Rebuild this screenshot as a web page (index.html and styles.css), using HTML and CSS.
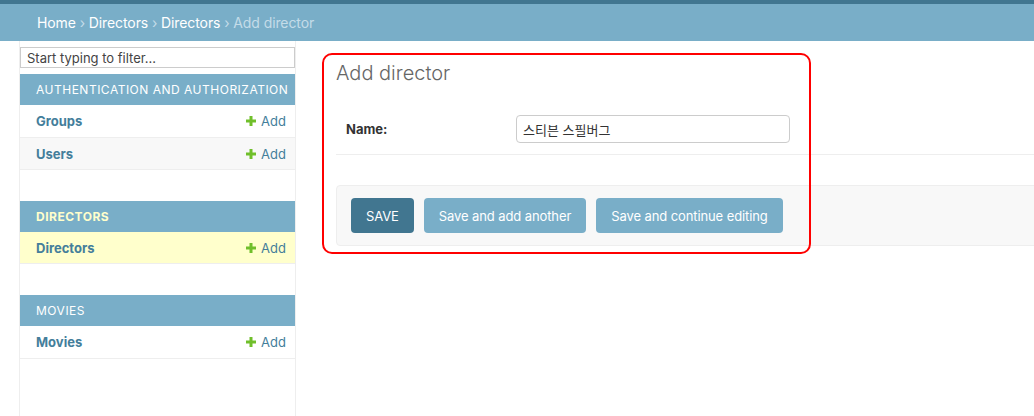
FILE: index.html
```html
<!DOCTYPE html>
<html lang="en">
<head>
<meta charset="utf-8">
<title>Add director</title>
<link rel="stylesheet" href="styles.css">
</head>
<body>
<div class="topstrip"></div>
<div class="breadcrumbs">
  <a href="#">Home</a> › <a href="#">Directors</a> › <a href="#">Directors</a> › Add director
</div>
<div class="main">
  <nav class="sidebar">
    <input class="filter" type="search" placeholder="Start typing to filter...">
    <div class="module">
      <div class="caption">Authentication and Authorization</div>
      <div class="row"><a class="model" href="#">Groups</a><a class="add" href="#"><svg class="plus" viewBox="0 0 10 10"><rect x="3.5" y="0" width="3" height="10"/><rect x="0" y="3.5" width="10" height="3"/></svg>Add</a></div>
      <div class="row alt"><a class="model" href="#">Users</a><a class="add" href="#"><svg class="plus" viewBox="0 0 10 10"><rect x="3.5" y="0" width="3" height="10"/><rect x="0" y="3.5" width="10" height="3"/></svg>Add</a></div>
    </div>
    <div class="module">
      <div class="caption current">Directors</div>
      <div class="row selected"><a class="model" href="#">Directors</a><a class="add" href="#"><svg class="plus" viewBox="0 0 10 10"><rect x="3.5" y="0" width="3" height="10"/><rect x="0" y="3.5" width="10" height="3"/></svg>Add</a></div>
    </div>
    <div class="module">
      <div class="caption">Movies</div>
      <div class="row"><a class="model" href="#">Movies</a><a class="add" href="#"><svg class="plus" viewBox="0 0 10 10"><rect x="3.5" y="0" width="3" height="10"/><rect x="0" y="3.5" width="10" height="3"/></svg>Add</a></div>
    </div>
  </nav>
  <div class="content">
    <h1>Add director</h1>
    <div class="form-row">
      <label class="label">Name:</label>
      <input class="text" type="text" value="스티븐 스필버그">
    </div>
    <div class="submit-row">
      <button class="btn default">SAVE</button>
      <button class="btn">Save and add another</button>
      <button class="btn">Save and continue editing</button>
    </div>
    <div class="highlight"></div>
  </div>
</div>
</body>
</html>
```

FILE: styles.css
```css
* { box-sizing: border-box; }
html, body { margin: 0; padding: 0; }
body {
  font-family: Inter, "Noto Sans CJK KR", sans-serif;
  font-size: 14px;
  color: #333;
  background: #fff;
  overflow: hidden;
  height: 416px;
}
a { text-decoration: none; }
.topstrip { height: 4px; background: #417690; }
.breadcrumbs {
  background: #79aec8;
  color: #c4dce8;
  height: 37px;
  padding: 0 37px;
  display: flex;
  align-items: center;
  font-size: 14px;
  letter-spacing: -0.1px;
  white-space: pre;
}
.breadcrumbs a { color: #fff; }
.main {
  display: flex;
  height: 375px;
}
.sidebar {
  margin-left: 19px;
  width: 277px;
  flex: none;
  border-left: 1px solid #eee;
  border-right: 1px solid #eee;
  padding-top: 6px;
}
.filter {
  display: block;
  width: 275px;
  height: 21px;
  margin: 0 0 6px 0;
  border: 1px solid #ccc;
  padding: 0 6px;
  font-family: Inter, sans-serif;
  font-size: 13px;
  color: #333;
  outline: none;
}
.filter::placeholder { color: #444; }
.module { margin-bottom: 31px; }
.caption {
  height: 31px;
  background: #79aec8;
  color: #fff;
  font-size: 12px;
  letter-spacing: 0.5px;
  text-transform: uppercase;
  padding-left: 16px;
  display: flex;
  align-items: center;
}
.caption.current { color: #ffc; font-weight: 700; }
.row {
  height: 33px;
  border-bottom: 1px solid #eee;
  display: flex;
  align-items: center;
  justify-content: space-between;
  padding: 0 9px 0 16px;
  font-size: 13px;
}
.row.alt { background: #f8f8f8; height: 32px; }
.row.selected { background: #ffc; height: 32px; }
.model { color: #447e9b; font-weight: 700; }
.add { color: #447e9b; display: flex; align-items: center; gap: 5px; }
.plus { width: 10px; height: 10px; fill: #70bf2b; }
.content {
  position: relative;
  flex: 1;
  padding: 20px 0 0 40px;
  min-width: 0;
}
h1 {
  margin: 0 0 20px 0;
  font-size: 20px;
  font-weight: 300;
  color: #666;
  line-height: 24px;
  padding-top: 0;
}
.form-row {
  margin-top: 20px;
  padding: 10px 10px 11px;
  border-bottom: 1px solid #eee;
  display: flex;
  align-items: center;
}
.label {
  width: 170px;
  font-size: 13px;
  font-weight: 700;
  color: #333;
}
.text {
  width: 274px;
  height: 28px;
  border: 1px solid #ccc;
  border-radius: 4px;
  padding: 0 6px;
  font-family: Inter, "Noto Sans CJK KR", sans-serif;
  font-size: 13px;
  color: #333;
}
.submit-row {
  margin: 30px -20px 0 0;
  padding: 12px 14px;
  background: #f8f8f8;
  border: 1px solid #eee;
  border-radius: 4px;
  display: flex;
  gap: 10px;
}
.btn {
  height: 35px;
  padding: 0 15px;
  border: none;
  border-radius: 4px;
  background: #79aec8;
  color: #fff;
  font-family: Inter, sans-serif;
  font-size: 13px;
  letter-spacing: -0.1px;
}
.btn.default { background: #417690; }
.highlight {
  position: absolute;
  left: 26px;
  top: 12px;
  width: 489px;
  height: 201px;
  border: 2px solid #f00;
  border-radius: 10px;
  pointer-events: none;
}
```
